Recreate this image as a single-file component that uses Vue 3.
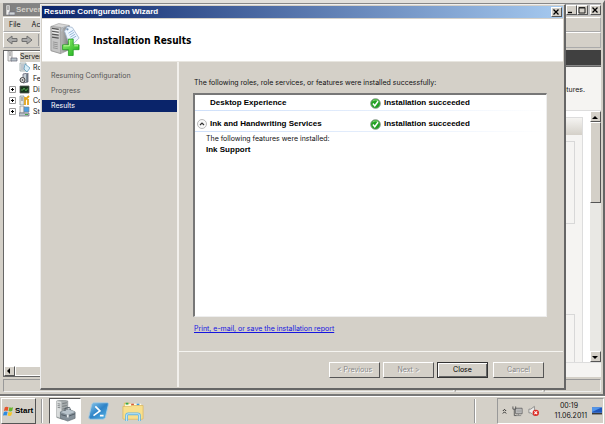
<script setup>
import { ref } from 'vue';

const steps = ['Resuming Configuration', 'Progress', 'Results'];
const activeStep = ref('Results');
const expanded = ref(true);

const tree = [
  { icon: 'roles', label: 'Ro' },
  { icon: 'features', label: 'Fe' },
  { icon: 'diagnostics', label: 'Dia', plus: true },
  { icon: 'config', label: 'Co', plus: true },
  { icon: 'storage', label: 'Sto', plus: true },
];
</script>

<template>
  <div class="desktop">
    <!-- Server Manager window -->
    <section class="manager">
      <div class="manager-title">
        <svg class="icon-title" viewBox="0 0 10 11">
          <path d="M1 0h4v10H1z" fill="#eee" stroke="#777" stroke-width=".6" />
          <path d="M2 2h2M2 4h2" stroke="#777" />
          <path d="M4 7h6v3H4z" fill="#cfd5d8" stroke="#667" stroke-width=".6" />
        </svg>
        <span>Server</span>
        <div class="window-buttons">
          <button aria-label="Minimize"><svg viewBox="0 0 8 8"><path d="M1 6.5h4" stroke="#000" stroke-width="1.4" /></svg></button>
          <button aria-label="Maximize"><svg viewBox="0 0 8 8"><path d="M1 1.5h6v5.500H1zM1 2h6" fill="none" stroke="#222" /></svg></button>
          <button class="last" aria-label="Close window"><svg viewBox="0 0 8 8"><path d="M1.500 1.500l5 5M6.500 1.500l-5 5" stroke="#000" stroke-width="1.300" /></svg></button>
        </div>
      </div>
      <nav class="menu"><span>File</span><span>Act</span></nav>
      <div class="toolbar">
        <svg viewBox="0 0 12 10"><path d="M1 5l5-4v2.500h5v3H6V9z" fill="#aaa" stroke="#707070" /></svg>
        <svg viewBox="0 0 12 10"><path d="M11 5L6 1v2.500H1v3h5V9z" fill="#aaa" stroke="#707070" /></svg>
        <i class="toolbar-sep"></i>
      </div>
      <div class="manager-body">
        <div class="tree">
          <ul>
            <li class="root">
              <svg class="icon-tree" viewBox="0 0 11 11">
                <path d="M1 0h4v10H1z" fill="#e8e8e8" stroke="#888" stroke-width=".7" />
                <path d="M2 2h2M2 4h2" stroke="#888" />
                <path d="M4 7h6v3H4z" fill="#b7c3ca" stroke="#667" stroke-width=".7" />
              </svg>
              <span>Server</span>
            </li>
            <li v-for="node in tree" :key="node.label">
              <span class="plus">
                <svg v-if="node.plus" viewBox="0 0 7 7"><path d="M.5.5h6v6h-6z" fill="#fff" stroke="#999" /><path d="M2 3.500h3M3.500 2v3" stroke="#000" /></svg>
              </span>
              <svg v-if="node.icon === 'roles'" class="icon-tree" viewBox="0 0 11 11">
                <path d="M1 1h6v8H1z" fill="#eee" stroke="#899" stroke-width=".7" />
                <path d="M2 3h3M2 5h3M2 7h3" stroke="#789" stroke-width=".8" />
                <path d="M6 2l5 4-3 4-3-3z" fill="#d8edf7" stroke="#5e9abb" stroke-width=".8" />
              </svg>
              <svg v-else-if="node.icon === 'features'" class="icon-tree" viewBox="0 0 11 11">
                <path d="M4 1l5-1v9l-5 1z" fill="#c8d0d6" stroke="#667" stroke-width=".8" />
                <path d="M8 1v8" stroke="#345" />
                <circle cx="3.500" cy="7" r="2.500" fill="#ddd" stroke="#444" />
                <circle cx="3.500" cy="7" r=".8" fill="#333" />
              </svg>
              <svg v-else-if="node.icon === 'diagnostics'" class="icon-tree" viewBox="0 0 11 11">
                <path d="M1 2h9v7H1z" fill="#17351c" stroke="#555" stroke-width=".8" />
                <path d="M2 6h2l1-2 2 3 1-2h1" fill="none" stroke="#62c45e" stroke-width=".7" />
              </svg>
              <svg v-else-if="node.icon === 'config'" class="icon-tree" viewBox="0 0 11 11">
                <path d="M1 1h4v9H1z" fill="#e3e7e9" stroke="#788" stroke-width=".7" />
                <path d="M2 3h2M2 5h2" stroke="#777" />
                <path d="M6 5l4-4M6 2v8M9 4v6" stroke="#e3a51d" stroke-width="1.800" />
              </svg>
              <svg v-else class="icon-tree" viewBox="0 0 11 11">
                <path d="M1 0h4v7H1z" fill="#eee" stroke="#888" stroke-width=".7" />
                <path d="M5 1h5v5H5z" fill="#4b9fe2" stroke="#789" stroke-width=".7" />
                <path d="M0 7h10v3H0z" fill="#bdc6cc" stroke="#667" stroke-width=".7" />
                <path d="M6 8.500h3" stroke="#46a84c" />
              </svg>
              <span>{{ node.label }}</span>
            </li>
          </ul>
          <div class="scroll-h">
            <button aria-label="Scroll left"><svg viewBox="0 0 8 8"><path d="M5 1v6L2 4z" /></svg></button>
            <i></i>
          </div>
        </div>
        <div class="detail">
          <div class="dark-bar"></div>
          <div class="intro">atures.</div>
          <div class="detail-scroll">
            <div class="sections">
              <div class="section-panel">
                <div class="section-head"></div>
                <div class="section-box"></div>
                <div class="section-gap"></div>
                <div class="section-box rest"></div>
              </div>
            </div>
            <div class="scroll-v">
              <button aria-label="Scroll up"><svg viewBox="0 0 8 8"><path d="M1 6h6L4 3z" /></svg></button>
              <i></i>
              <button aria-label="Scroll down"><svg viewBox="0 0 8 8"><path d="M1 3h6L4 6z" /></svg></button>
            </div>
          </div>
          <div class="detail-foot"></div>
        </div>
      </div>
      <div class="statusbar"><i></i><i></i><i></i></div>
    </section>

    <!-- Wizard on top of the manager -->
    <section class="wizard">
      <div class="wizard-title">
        <span>Resume Configuration Wizard</span>
        <button aria-label="Close wizard"><svg viewBox="0 0 8 8"><path d="M1.500 1.500l5 5M6.500 1.500l-5 5" stroke="#000" stroke-width="1.300" /></svg></button>
      </div>
      <header class="wizard-head">
        <svg class="icon-server" viewBox="0 0 32 34">
          <defs>
            <linearGradient id="side" x1="0" x2="1"><stop offset="0" stop-color="#bcbcbc" /><stop offset="1" stop-color="#737373" /></linearGradient>
            <linearGradient id="cross" x1="0" y1="0" x2="1" y2="1"><stop offset="0" stop-color="#93f070" /><stop offset="1" stop-color="#18ad18" /></linearGradient>
          </defs>
          <path d="M1 3l8-3 11 2v25l-9 4-10-3z" fill="#d8d8d8" stroke="#999" stroke-width=".6" />
          <path d="M11 4l9-2v25l-9 4z" fill="url(#side)" />
          <path d="M1 3l10 1v27L1 28z" fill="#c5c5c5" stroke="#858585" stroke-width=".6" />
          <path d="M2 5l7 1M2 8l7 1M2 11l7 1M2 14l7 1" stroke="#555" stroke-width="1.200" />
          <path d="M2 6.500l7 1M2 9.500l7 1" stroke="#fff" stroke-width=".8" />
          <path d="M3 19l5 1M3 21l5 1M3 23l5 1M3 25l5 1" stroke="#888" stroke-width=".8" />
          <path d="M12 8c0-5 5-6 7-3" fill="none" stroke="#bac3cd" />
          <path d="M15 8l3-5 5 1 7 11-6 6-5-2z" fill="#edf6ff" stroke="#9fb3cb" stroke-width=".8" />
          <circle cx="18" cy="6" r="1.200" fill="#7590ac" />
          <path d="M19 10l5-3M20 12l5-3M21 14l5-3M22 16l5-3" stroke="#8baed3" stroke-width=".9" />
          <path d="M19 16h5v6h6v5h-6v6h-5v-6h-6v-5h6z" fill="url(#cross)" stroke="#149414" stroke-width=".7" />
          <path d="M20 17v6h-6M25 23h4" fill="none" stroke="#bfff9e" />
        </svg>
        <h1>Installation Results</h1>
      </header>
      <div class="wizard-body">
        <nav class="steps">
          <a v-for="step in steps" :key="step" href="#" :class="{ active: step === activeStep }" @click.prevent="activeStep = step">{{ step }}</a>
        </nav>
        <div class="content">
          <div class="content-main">
            <p>The following roles, role services, or features were installed successfully:</p>
            <div class="results">
              <div class="result">
                <span class="chevron"></span>
                <strong>Desktop Experience</strong>
                <svg class="icon-ok" viewBox="0 0 12 12"><circle cx="6" cy="6" r="5.300" fill="#23a123" stroke="#929b92" /><path d="M3 3.500a4 4 0 016 0" stroke="#8ade78" fill="none" /><path d="M3.200 6l2 2.500L8.800 3.500" fill="none" stroke="#fff" stroke-width="1.600" /></svg>
                <strong>Installation succeeded</strong>
              </div>
              <div class="result second">
                <button class="chevron" aria-label="Toggle details" @click="expanded = !expanded">
                  <svg viewBox="0 0 10 10"><circle cx="5" cy="5" r="4.500" fill="#f8f8f8" stroke="#aaa" stroke-width=".8" /><path d="M3 6l2-2 2 2" fill="none" stroke="#333" stroke-width="1.200" /></svg>
                </button>
                <strong>Ink and Handwriting Services</strong>
                <svg class="icon-ok" viewBox="0 0 12 12"><circle cx="6" cy="6" r="5.300" fill="#23a123" stroke="#929b92" /><path d="M3 3.500a4 4 0 016 0" stroke="#8ade78" fill="none" /><path d="M3.200 6l2 2.500L8.800 3.500" fill="none" stroke="#fff" stroke-width="1.600" /></svg>
                <strong>Installation succeeded</strong>
              </div>
              <div v-if="expanded" class="details">
                <div>The following features were installed:</div>
                <strong>Ink Support</strong>
              </div>
            </div>
            <a class="report" href="#">Print, e-mail, or save the installation report</a>
          </div>
          <footer class="actions">
            <button disabled>&lt; Previous</button>
            <button disabled>Next &gt;</button>
            <button class="default">Close</button>
            <button disabled>Cancel</button>
          </footer>
        </div>
      </div>
    </section>

    <footer class="taskbar">
      <button class="start">
        <svg viewBox="0 0 12 12">
          <path d="M2 2q2-1.500 4 0L5 6Q3 5 1 6z" fill="#e5532b" />
          <path d="M7 2q2 1 4 0l-1 4q-2 1-4 0z" fill="#69b52f" />
          <path d="M1 7q2-1 4 0l-1 4q-2-1-4 0z" fill="#2d8be0" />
          <path d="M6 7q2 1 4 0l-1 4q-2 1-4 0z" fill="#f7c525" />
        </svg>
        Start
      </button>
      <i class="grip"></i>
      <button class="task active" aria-label="Server Manager">
        <svg viewBox="0 0 24 24">
          <path d="M3 1l6-1 6 1v18l-6 2-6-2z" fill="#a4aaab" stroke="#737a7c" stroke-width=".6" />
          <path d="M3 1l5 1v18l-5-2z" fill="#d9dcdc" />
          <path d="M4 4l3 .5M4 6l3 .5M4 8l3 .5M9 4l5-1M9 7l5-1M9 10l5-1" stroke="#686e70" stroke-width=".8" />
          <path d="M7 13l9-3 7 3v7l-8 3-8-3z" fill="#849099" stroke="#59656e" stroke-width=".7" />
          <path d="M7 13l9-3 7 3-8 3z" fill="#b8c4cc" />
          <path d="M12 12V9l5-1 1 3M8 16l7 2 8-3" fill="none" stroke="#4e5961" />
          <path d="M14 16h2v3h-2z" fill="#e7edf0" />
        </svg>
      </button>
      <button class="task" aria-label="PowerShell">
        <svg viewBox="0 0 24 24">
          <defs><linearGradient id="shell" x1="0" y1="0" x2="1" y2="1"><stop offset="0" stop-color="#8cc9ec" /><stop offset=".5" stop-color="#2e83c7" /><stop offset="1" stop-color="#5bb9e8" /></linearGradient></defs>
          <path d="M6 3h15q2 0 1 3l-3 13q-1 2-3 2H3q-3 0-2-3L4 5q1-2 2-2z" fill="url(#shell)" stroke="#a9cce0" />
          <path d="M8 7l5 5-7 5M13 17h4" fill="none" stroke="#fff" stroke-width="1.800" />
        </svg>
      </button>
      <button class="task" aria-label="Explorer">
        <svg viewBox="0 0 24 24">
          <path d="M2 3h7l1 2h11v4H2z" fill="#e4bd58" />
          <path d="M3 4h18v6H3z" fill="#fffbe4" />
          <path d="M4 4h3" stroke="#34a84b" stroke-width="2" /><path d="M10 5h3" stroke="#d95937" stroke-width="2" /><path d="M16 5h3" stroke="#3c97df" stroke-width="2" />
          <path d="M1 7h8l2-1h12v14q0 1-1 1H2q-1 0-1-1z" fill="#f8df8c" stroke="#dcb85e" stroke-width=".8" />
          <path d="M5 23v-6q0-2 2-2h10q2 0 2 2v6" fill="none" stroke="#62b3df" stroke-width="3" />
          <path d="M5 23v-6q0-2 2-2h10q2 0 2 2v6" fill="none" stroke="#bfe6f8" stroke-width="1.300" />
        </svg>
      </button>
      <i class="grip right"></i>
      <div class="tray">
        <svg class="icon-up" viewBox="0 0 6 8"><path d="M1 4l2-2 2 2M1 7l2-2 2 2" fill="none" stroke="#222" stroke-width="1.100" /></svg>
        <svg viewBox="0 0 12 12"><path d="M4 3h7v6H4z" fill="#d8d8d8" stroke="#666" /><path d="M5 5h5M5 7h5M5 11h5M7 9v2" stroke="#888" /><path d="M1 1v3h3V1M2.500 4v7H5" fill="none" stroke="#555" /></svg>
        <svg viewBox="0 0 12 12"><path d="M1 4h2l4-3v10L3 8H1z" fill="#eee" stroke="#777" stroke-width=".8" /><circle cx="8.500" cy="8" r="3.500" fill="#dc2c26" /><path d="M7 6.500l3 3M10 6.500l-3 3" stroke="#fff" stroke-width="1.200" /></svg>
        <div class="clock"><div>00:19</div><div>11.06.2011</div></div>
        <svg class="icon-desk" viewBox="0 0 11 10"><path d="M0 1h11v6H0z" fill="#1f57bd" /><path d="M0 1h11L0 6z" fill="#5496e9" /><path d="M0 8h11" stroke="#333" stroke-width="1.500" /></svg>
      </div>
    </footer>
  </div>
</template>

<style>
body {
  margin: 0;
  background: #d4d0c8;
}
</style>

<style scoped>
* {
  box-sizing: border-box;
}

.desktop {
  position: relative;
  display: flex;
  flex-direction: column;
  min-height: 100vh;
  font-family: Inter, 'Liberation Sans', sans-serif;
  font-size: 7px;
  line-height: 10px;
  color: #111;
  background: #d4d0c8;
}

svg {
  display: block;
  flex: none;
}

button {
  font: inherit;
  color: inherit;
  padding: 0;
  background: #d4d0c8;
  border: 1px solid;
  border-color: #fff #555 #555 #fff;
}

h1,
p,
ul {
  margin: 0;
  padding: 0;
}

strong,
.manager-title,
.wizard-title,
.start {
  font-family: 'Liberation Sans', Arial, sans-serif;
  font-size: 8px;
  font-weight: bold;
}

/* manager window */
.manager {
  flex: 1;
  display: flex;
  flex-direction: column;
  padding: 0 2px 2px 3px;
  border-top: 3px solid #e2e0dc;
  border-right: 2px solid #666;
  border-bottom: 2px solid #777;
}

.manager-title {
  display: flex;
  align-items: center;
  gap: 1px;
  height: 13px;
  margin-bottom: 1px;
  padding-left: 2px;
  border-top: 1px solid #888;
  color: #d4d0c8;
  background: linear-gradient(90deg, #808080, #c0c0c0);
}

.icon-title {
  width: 10px;
  height: 11px;
}

.window-buttons {
  display: flex;
  margin-left: auto;
}

.window-buttons button {
  width: 11px;
  height: 10px;
}

.window-buttons .last {
  margin-left: 2px;
}

.window-buttons svg,
.wizard-title svg {
  width: 8px;
  height: 8px;
}

.menu {
  display: flex;
  align-items: center;
  gap: 11px;
  height: 15px;
  padding-left: 5px;
  border: 1px solid;
  border-color: #fff #aaa #aaa #fff;
}

.toolbar {
  display: flex;
  align-items: center;
  gap: 3px;
  height: 16px;
  padding-left: 2px;
  border: 1px solid;
  border-color: #fff #aaa #aaa #fff;
}

.toolbar svg {
  width: 12px;
  height: 10px;
}

.toolbar-sep {
  width: 1px;
  height: 12px;
  margin-left: 2px;
  background: #999;
}

.manager-body {
  flex: 1;
  display: flex;
  justify-content: space-between;
  margin-top: 2px;
}

.tree {
  display: flex;
  flex-direction: column;
  justify-content: space-between;
  width: 48px;
  background: #fff;
  border: 1px solid #666;
}

.tree ul {
  list-style: none;
  overflow: hidden;
}

.tree li {
  display: flex;
  align-items: center;
  gap: 3px;
  height: 11px;
  padding-left: 5px;
}

.tree .root {
  gap: 2px;
  padding-left: 3px;
}

.root span {
  flex: 1;
  background: #d4d0c8;
}

.icon-tree {
  width: 11px;
  height: 11px;
}

.plus {
  width: 7px;
  height: 7px;
}

.scroll-h {
  display: flex;
  height: 10px;
}

.scroll-h button,
.scroll-v button {
  flex: none;
  width: 11px;
  height: 11px;
}

.scroll-h button {
  height: 10px;
}

.scroll-h svg,
.scroll-v svg {
  width: 8px;
  height: 8px;
}

.scroll-h i {
  flex: 1;
  background: #d4d0c8;
  border: 1px solid #fff;
}

.detail {
  display: flex;
  flex-direction: column;
  width: 48px;
  background: #f5f4f2;
}

.dark-bar {
  height: 16px;
  background: #404040;
  border-bottom: 1px solid #888;
}

.intro {
  height: 44px;
  padding: 18px 16px 0 0;
  text-align: right;
  border-top: 1px solid #666;
}

.detail-scroll {
  flex: 1;
  display: flex;
  background: #fff;
  border-top: 1px solid #ddd;
  border-bottom: 1px solid #ddd;
}

.sections {
  flex: 1;
  display: flex;
  padding: 6px 7px 0 0;
}

.section-panel {
  flex: 1;
  display: flex;
  flex-direction: column;
  background: #f5f4f2;
  border: 1px solid #ddd;
  border-bottom: 0;
}

.section-head {
  height: 17px;
  background: linear-gradient(#f5f4f2, #d4d0c8);
}

.section-box {
  height: 83px;
  margin: 6px 7px 0 0;
  border: 1px solid #d8d8d8;
}

.section-gap {
  height: 84px;
}

.section-box.rest {
  flex: 1;
  border-bottom: 0;
}

.scroll-v {
  display: flex;
  flex-direction: column;
  width: 11px;
  background: #e9e8e4;
}

.scroll-v i {
  height: 81px;
  background: #d4d0c8;
  border: 1px solid;
  border-color: #fff #555 #555 #fff;
}

.scroll-v button:last-child {
  margin-top: auto;
}

.detail-foot {
  height: 14px;
}

.statusbar {
  display: flex;
  justify-content: flex-end;
  gap: 1px;
  height: 13px;
  margin-top: 2px;
}

.statusbar i {
  width: 88px;
  border: 1px solid;
  border-color: #999 #eee #eee #999;
}

.statusbar i:first-child {
  flex: 1;
}

.statusbar i:last-child {
  width: 57px;
}

/* wizard */
.wizard {
  position: absolute;
  top: 4px;
  right: 39px;
  bottom: 34px;
  left: 40px;
  display: flex;
  flex-direction: column;
  padding: 1px;
  background: #d4d0c8;
  border: 1px solid;
  border-color: #eee #666 #666 #eee;
  border-right-width: 2px;
  border-bottom-width: 2px;
}

.wizard-title {
  display: flex;
  align-items: center;
  justify-content: space-between;
  height: 12px;
  margin-bottom: 1px;
  padding: 0 1px 0 2px;
  color: #fff;
  background: linear-gradient(90deg, #0a246a, #a6caf0);
}

.wizard-title button {
  width: 11px;
  height: 10px;
}

.wizard-head {
  display: flex;
  align-items: center;
  gap: 12px;
  height: 43px;
  padding-left: 8px;
  background: #fff;
  border-bottom: 1px solid #e8e6e0;
}

.icon-server {
  width: 31px;
  height: 34px;
}

h1 {
  padding-top: 2px;
  font-family: 'DejaVu Sans Condensed', 'DejaVu Sans', sans-serif;
  font-size: 10px;
  line-height: 14px;
  color: #000;
}

.wizard-body {
  flex: 1;
  display: flex;
}

.steps {
  width: 135px;
  padding-top: 8px;
}

.steps a {
  display: block;
  height: 12px;
  margin-bottom: 3px;
  padding-left: 9px;
  line-height: 12px;
  color: #555;
  text-decoration: none;
}

.steps .active {
  color: #fff;
  background: #0a246a;
}

.content {
  flex: 1;
  display: flex;
  flex-direction: column;
  border-left: 2px solid #f2f0ec;
}

.content-main {
  flex: 1;
  display: flex;
  flex-direction: column;
  align-items: flex-start;
  padding: 16px 16px 17px 14px;
}

.content-main p,
.report {
  padding-left: 1px;
}

.results {
  flex: 1;
  align-self: stretch;
  margin: 5px 0 7px;
  background: #fff;
  border: 1px solid;
  border-color: #777 #eee #eee #777;
  border-top-width: 2px;
  border-left-width: 2px;
}

.result {
  display: grid;
  grid-template-columns: 10px 157px 11px 1fr;
  column-gap: 3px;
  align-items: center;
  height: 16px;
  padding-left: 2px;
  color: #000;
  background: linear-gradient(90deg, #cfe0fa, #e8f0fc 60%, #fff) bottom / 100% 1px no-repeat;
}

.second {
  margin-top: 5px;
}

.chevron {
  width: 10px;
  height: 10px;
  background: none;
  border: 0;
}

.icon-ok {
  width: 11px;
  height: 11px;
}

.details {
  padding: 2px 11px;
}

.details strong {
  display: block;
  margin-top: 1px;
  color: #000;
}

.report {
  color: #1515e0;
}

.actions {
  display: flex;
  justify-content: flex-end;
  gap: 3px;
  height: 36px;
  padding: 10px 19px 0 0;
  border-top: 1px solid #f5f4f0;
}

.actions button {
  width: 51px;
  height: 16px;
}

.actions button:disabled {
  color: #888;
  text-shadow: 1px 1px #fff;
}

.actions button:last-child {
  margin-left: 2px;
}

.actions .default {
  color: #000;
  border: 1px solid #333;
  box-shadow: inset 1px 1px #fff, inset -1px -1px #666;
}

/* taskbar */
.taskbar {
  display: flex;
  align-items: center;
  height: 28px;
  padding: 0 1px;
  border-top: 1px solid #fff;
}

.start {
  display: flex;
  align-items: center;
  gap: 1px;
  width: 35px;
  height: 26px;
  padding-left: 1px;
  color: #000;
}

.start svg {
  width: 11px;
  height: 12px;
}

.grip {
  width: 2px;
  height: 24px;
  margin: 0 6px 0 5px;
  border-left: 1px solid #999;
  border-right: 1px solid #fff;
}

.grip.right {
  margin: 0 21px 0 auto;
}

.task {
  display: flex;
  justify-content: center;
  align-items: center;
  width: 32px;
  height: 26px;
  margin-right: 2px;
  border-color: transparent;
}

.task.active {
  background: #fff;
  border-color: #555 #fff #fff #555;
}

.task svg {
  width: 22px;
  height: 22px;
}

.tray {
  display: flex;
  align-items: center;
  gap: 5px;
  width: 107px;
  height: 26px;
  padding: 0 1px 0 4px;
  border: 1px solid;
  border-color: #999 #fff #fff #999;
}

.tray svg {
  width: 11px;
  height: 12px;
}

.tray .icon-up {
  width: 5px;
  height: 8px;
}

.clock {
  flex: 1;
  text-align: right;
}

.clock div:first-child {
  padding-right: 9px;
}

.tray .icon-desk {
  width: 10px;
  height: 10px;
}
</style>
